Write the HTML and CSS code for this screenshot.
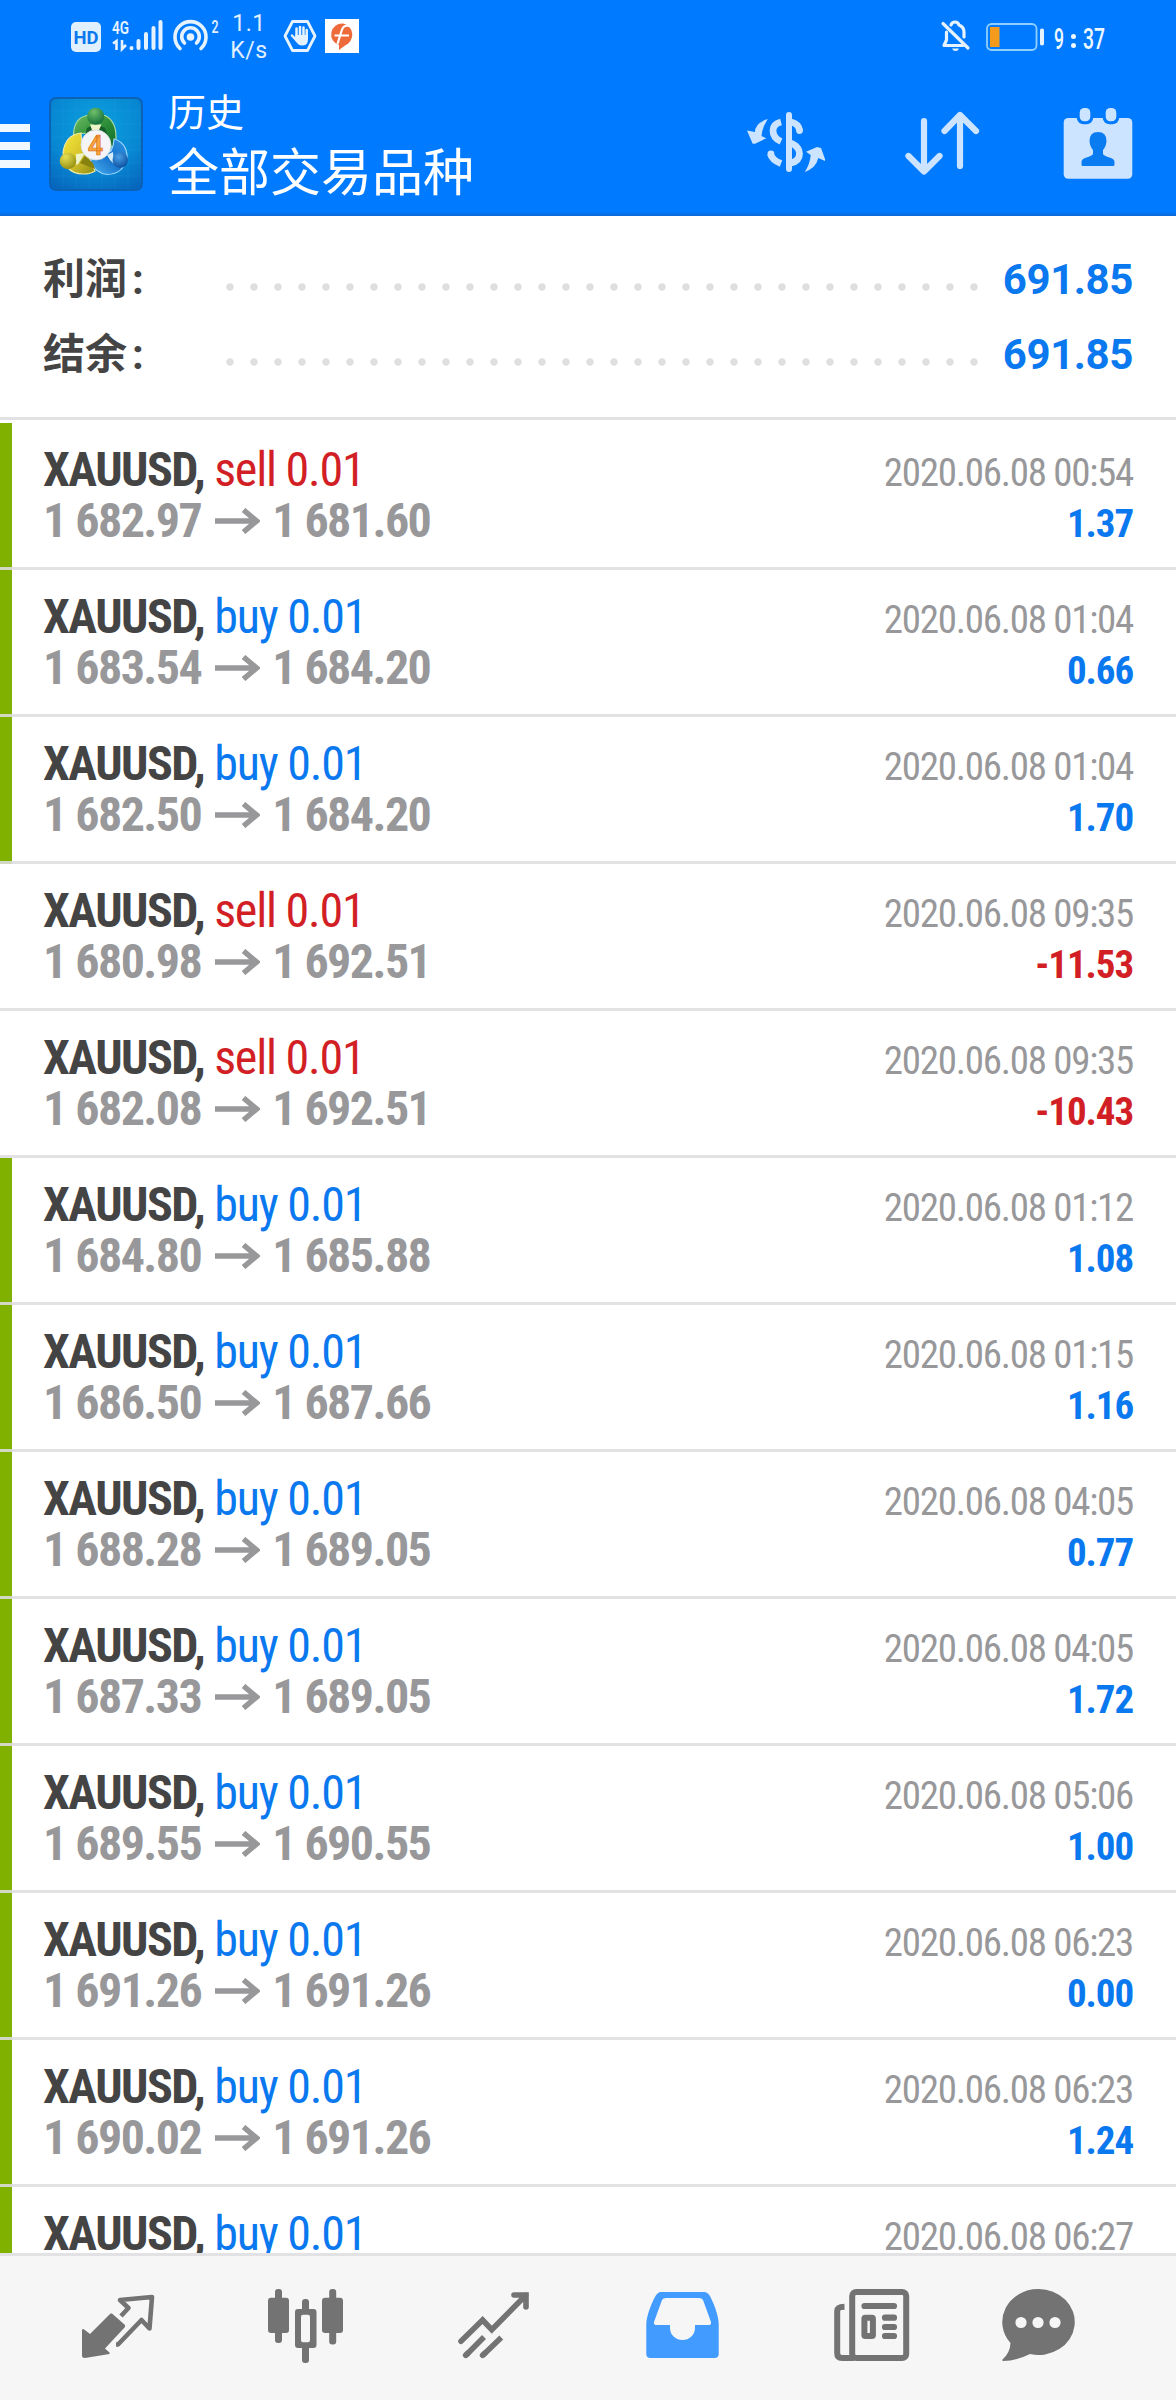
FILE: index.html
```html
<!DOCTYPE html>
<html lang="zh-CN">
<head>
<meta charset="utf-8">
<title>历史</title>
<link rel="stylesheet" href="styles.css">
</head>
<body>
<svg width="0" height="0" class="defs"><symbol id="arrow" viewBox="0 0 45 26"><path d="M0 13H41M28.500 2L41.500 13L28.500 24" fill="none" stroke="currentColor" stroke-width="5.500"/></symbol></svg>
<div class="screen">
<header class="header">
  <div class="status">
    <svg class="s-hd" width="30" height="30" viewBox="0 0 30 30"><rect width="30" height="30" rx="5" fill="#e0f0ff"/><text x="2.500" y="22" font-size="19" font-weight="700" fill="#0b78ee" textLength="25" lengthAdjust="spacingAndGlyphs">HD</text></svg>
    <svg class="s-net" width="51" height="34" viewBox="0 0 51 34"><text x="0" y="15" font-size="19" font-weight="600" fill="#e6f3ff" textLength="17" lengthAdjust="spacingAndGlyphs">4G</text><g stroke="#e6f3ff" stroke-width="2.600" fill="none"><path d="M1 24.500L4.500 22V31M10 21V30L14 26"/></g><g stroke="#e6f3ff" stroke-width="4" stroke-linecap="round"><path d="M19.500 29V29.200M26.500 22V29M34 15V29M41.500 9V29M48.500 3V29"/></g></svg>
    <svg class="s-hot" width="46" height="34" viewBox="0 0 46 34"><g fill="none" stroke="#e6f3ff" stroke-width="3.600" stroke-linecap="round"><path d="M7 29.500A15.500 15.500 0 1 1 28 29.500"/><path d="M11.500 24A8.800 8.800 0 1 1 23.500 24"/></g><circle cx="17.500" cy="18" r="3.800" fill="#e6f3ff"/><text x="38.500" y="14" font-size="18" font-weight="500" fill="#e6f3ff" textLength="7" lengthAdjust="spacingAndGlyphs">2</text></svg>
    <div class="s-speed"><span>1.1</span><span>K/s</span></div>
    <svg class="s-hex" width="34" height="34" viewBox="0 0 34 34"><path d="M9.500 2.500H24.500L32 17L24.500 31.500H9.500L2 17Z" fill="none" stroke="#e6f3ff" stroke-width="2.800" stroke-linejoin="round"/><g stroke="#e6f3ff" stroke-width="2.500" stroke-linecap="round"><path d="M13.500 9.500V18M17 8V18M20.500 8.500V18M23.700 11V18M9 16.500L14 22"/></g><path d="M12.300 16H25V20Q25 26 20 26.500Q15 27 12 21Z" fill="#e6f3ff"/></svg>
    <svg class="s-f" width="34" height="34" viewBox="0 0 34 34"><rect width="34" height="34" fill="#fff"/><path d="M18 4.500A11.500 11.500 0 0 1 20 26.500L14 31V26A11 11 0 0 1 18 4.500Z" fill="#ee6a3a"/><path d="M26 7.500Q18.500 4.500 16.500 12L12.500 25M9.500 16.500H24" fill="none" stroke="#fff" stroke-width="2.200"/></svg>
    <svg class="s-bell" width="30" height="32" viewBox="0 0 30 32"><g fill="none" stroke="#e6f3ff" stroke-width="3.200" stroke-linecap="round" stroke-linejoin="round"><path d="M2 3.500L27 28M5.500 12V20L3 25.500H22M10 5Q11 2 14 2Q17 2 18 5Q23 7 23 12V17"/></g><path d="M11 28.500H18Q17 31 14.500 31Q12 31 11 28.500Z" fill="#e6f3ff"/></svg>
    <svg class="s-bat" width="59" height="28" viewBox="0 0 59 28"><rect x="1" y="1" width="49.500" height="26" rx="4.500" fill="none" stroke="#8fd0ff" stroke-width="1.800"/><rect x="4" y="4" width="9.500" height="20" fill="#f59b1c"/><rect x="54" y="5.500" width="4" height="17" rx="1.800" fill="#e6f3ff"/></svg>
    <svg class="s-time" width="54" height="28" viewBox="0 0 54 28"><g font-size="30" font-weight="500" fill="#f0f8ff"><text x="1" y="25" textLength="10" lengthAdjust="spacingAndGlyphs">9</text><text x="30" y="25" textLength="22" lengthAdjust="spacingAndGlyphs">37</text></g><circle cx="20.500" cy="12.500" r="2.500" fill="#f0f8ff"/><circle cx="20.500" cy="21.500" r="2.500" fill="#f0f8ff"/></svg>
  </div>
  <div class="appbar">
    <div class="menu"><i></i><i></i><i></i></div>
    <svg class="logo" width="94" height="94" viewBox="0 0 94 94">
      <defs>
        <radialGradient id="bg" cx=".5" cy=".3" r=".8"><stop offset="0" stop-color="#0ba0df"/><stop offset=".6" stop-color="#0888d2"/><stop offset="1" stop-color="#0766bd"/></radialGradient>
        <linearGradient id="gb" x1="0" y1="0" x2="1" y2="1"><stop offset="0" stop-color="#6dbb62"/><stop offset=".5" stop-color="#2f8f3a"/><stop offset="1" stop-color="#0f6a2a"/></linearGradient>
        <linearGradient id="yb" x1="0" y1="0" x2="1" y2="1"><stop offset="0" stop-color="#f6e93c"/><stop offset=".5" stop-color="#d8c52a"/><stop offset="1" stop-color="#8f8a14"/></linearGradient>
        <linearGradient id="bb" x1="1" y1="0" x2="0" y2="1"><stop offset="0" stop-color="#2f93e0"/><stop offset=".5" stop-color="#1673cc"/><stop offset="1" stop-color="#4fb4f2"/></linearGradient>
        <radialGradient id="gr" cx=".4" cy=".25" r=".8"><stop offset="0" stop-color="#6fbf6a"/><stop offset="1" stop-color="#0f6a38"/></radialGradient>
        <radialGradient id="ye" cx=".35" cy=".25" r=".8"><stop offset="0" stop-color="#e6e054"/><stop offset="1" stop-color="#938d10"/></radialGradient>
        <radialGradient id="bl" cx=".4" cy=".3" r=".8"><stop offset="0" stop-color="#4a9fe6"/><stop offset="1" stop-color="#07489a"/></radialGradient>
      </defs>
      <rect x="1" y="1" width="92" height="92" rx="6" fill="url(#bg)" stroke="#0962b8" stroke-width="2"/>
      <path d="M14 2V92M27 2V92M40 2V92M53 2V92M66 2V92M79 2V92M2 14H92M2 27H92M2 40H92M2 53H92M2 66H92M2 79H92" stroke="#35b5ea" stroke-opacity=".12"/>
      <path d="M24.500 38Q25 21 38 18.500H56Q67 24 67 40Q67 47 64 51L56 44L36 36Z" fill="url(#gb)" stroke="#a8dca0" stroke-width="1.200"/>
      <path d="M32 36Q16 38 14 56L18 70Q24 77 34 77Q42 77 46 74L40 60L33 50Z" fill="url(#yb)" stroke="#efe9a0" stroke-width="1.200"/>
      <path d="M65 42Q78 46 78 60Q75 77 58 77.500Q48 77 40 64L50 60L62 54Q65 48 65 42Z" fill="url(#bb)" stroke="#9ad6ff" stroke-width="1.200"/>
      <path d="M38 31Q47 25 56 31L60 42L47 33L36 39Z" fill="#17602a"/>
      <path d="M41 27.500H52.500L50 33H43ZM27 57L36 56L31 64Q30 67 27 68Z" fill="#eef3c8"/>
      <path d="M31 66L36 59L44 66L46 72Z" fill="#87820f"/>
      <path d="M58 58L64 55L65 67L61 63Z" fill="#d6ecfb"/>
      <circle cx="46.700" cy="19.300" r="8.500" fill="url(#gr)"/><circle cx="19" cy="64" r="8.300" fill="url(#ye)"/><circle cx="71.200" cy="63" r="7.700" fill="url(#bl)"/>
      <circle cx="47" cy="48" r="15" fill="#f5f5f7" stroke="#d8dde2" stroke-width=".8"/>
      <text x="46.500" y="57.500" text-anchor="middle" font-size="27" font-weight="600" fill="#f8a93c" stroke="#dd6f1c" stroke-width=".7">4</text>
    </svg>
    <div class="titles"><span class="t1">历史</span><span class="t2">全部交易品种</span></div>
    <svg class="i-cur" width="82" height="64" viewBox="0 0 82 64"><g fill="none" stroke="#cce4ff" stroke-width="6.800"><path d="M44 5V59" stroke-width="6" stroke-linecap="round"/><path d="M36 12Q28 14 28 20.500Q28 28 36 31.500"/><path d="M25.500 44Q27 50 36 53.500" /><path d="M46 12Q54 14 54.500 20.500M46 33Q54.500 37 54.500 43.500Q54.500 51 46 53"/></g><g fill="#cce4ff"><circle cx="25.900" cy="44" r="3.400"/><circle cx="54.500" cy="20.500" r="3.400"/><path d="M22.700 9Q10 13 10 22L2 20.500L7.700 33.700H10L21.300 28.300L16.500 26Q17 18 22.700 9Z"/><path d="M59.700 62Q65 54 65.700 45L61 41.700L72 37L76 38L80 49V51L73.300 48Q71 58 59.700 62Z"/></g></svg>
    <svg class="i-sort" width="76" height="66" viewBox="0 0 76 66"><g fill="none" stroke="#cce4ff" stroke-width="6.200" stroke-linecap="round" stroke-linejoin="round"><path d="M20 11V61M4.500 46L20 61.500L35.500 46M56 56V5M40.500 21L56 5L72 21"/></g></svg>
    <svg class="i-cal" width="72" height="74" viewBox="0 0 72 74"><rect x="1.700" y="12" width="68.600" height="60.700" rx="4.500" fill="#cce4ff"/><rect x="14.700" y="-1" width="16.600" height="19.300" rx="7" fill="#007aff"/><rect x="40.700" y="-1" width="16.600" height="19.300" rx="7" fill="#007aff"/><rect x="17.700" y="2" width="10.600" height="13.300" rx="4.500" fill="#cce4ff"/><rect x="43.700" y="2" width="10.600" height="13.300" rx="4.500" fill="#cce4ff"/><path d="M36 26Q44.500 26 44.500 35Q44 41 41 44V48Q42 50 49 52Q52.500 53.500 52.500 56V58.500Q52.500 60 51 60H21Q19.500 60 19.500 58.500V56Q19.500 53.500 23 52Q30 50 31 48V44Q28 41 27.500 35Q27.500 26 36 26Z" fill="#0a7cf2"/></svg>
  </div>
</header>
<section class="summary">
  <div class="sum"><b class="label">利润<i>:</i></b><span class="dots"></span><b class="total">691.85</b></div>
  <div class="sum"><b class="label">结余<i>:</i></b><span class="dots"></span><b class="total">691.85</b></div>
</section>
<main class="list">
<div class="row tp"><div class="deal"><p><b>XAUUSD,</b> <span class="sell">sell 0.01</span></p><p class="price">1 682.97<svg><use href="#arrow"/></svg>1 681.60</p></div><div class="res"><time>2020.06.08 00:54</time><b class="up">1.37</b></div></div>
<div class="row tp"><div class="deal"><p><b>XAUUSD,</b> <span class="buy">buy 0.01</span></p><p class="price">1 683.54<svg><use href="#arrow"/></svg>1 684.20</p></div><div class="res"><time>2020.06.08 01:04</time><b class="up">0.66</b></div></div>
<div class="row tp"><div class="deal"><p><b>XAUUSD,</b> <span class="buy">buy 0.01</span></p><p class="price">1 682.50<svg><use href="#arrow"/></svg>1 684.20</p></div><div class="res"><time>2020.06.08 01:04</time><b class="up">1.70</b></div></div>
<div class="row"><div class="deal"><p><b>XAUUSD,</b> <span class="sell">sell 0.01</span></p><p class="price">1 680.98<svg><use href="#arrow"/></svg>1 692.51</p></div><div class="res"><time>2020.06.08 09:35</time><b class="down">-11.53</b></div></div>
<div class="row"><div class="deal"><p><b>XAUUSD,</b> <span class="sell">sell 0.01</span></p><p class="price">1 682.08<svg><use href="#arrow"/></svg>1 692.51</p></div><div class="res"><time>2020.06.08 09:35</time><b class="down">-10.43</b></div></div>
<div class="row tp"><div class="deal"><p><b>XAUUSD,</b> <span class="buy">buy 0.01</span></p><p class="price">1 684.80<svg><use href="#arrow"/></svg>1 685.88</p></div><div class="res"><time>2020.06.08 01:12</time><b class="up">1.08</b></div></div>
<div class="row tp"><div class="deal"><p><b>XAUUSD,</b> <span class="buy">buy 0.01</span></p><p class="price">1 686.50<svg><use href="#arrow"/></svg>1 687.66</p></div><div class="res"><time>2020.06.08 01:15</time><b class="up">1.16</b></div></div>
<div class="row tp"><div class="deal"><p><b>XAUUSD,</b> <span class="buy">buy 0.01</span></p><p class="price">1 688.28<svg><use href="#arrow"/></svg>1 689.05</p></div><div class="res"><time>2020.06.08 04:05</time><b class="up">0.77</b></div></div>
<div class="row tp"><div class="deal"><p><b>XAUUSD,</b> <span class="buy">buy 0.01</span></p><p class="price">1 687.33<svg><use href="#arrow"/></svg>1 689.05</p></div><div class="res"><time>2020.06.08 04:05</time><b class="up">1.72</b></div></div>
<div class="row tp"><div class="deal"><p><b>XAUUSD,</b> <span class="buy">buy 0.01</span></p><p class="price">1 689.55<svg><use href="#arrow"/></svg>1 690.55</p></div><div class="res"><time>2020.06.08 05:06</time><b class="up">1.00</b></div></div>
<div class="row tp"><div class="deal"><p><b>XAUUSD,</b> <span class="buy">buy 0.01</span></p><p class="price">1 691.26<svg><use href="#arrow"/></svg>1 691.26</p></div><div class="res"><time>2020.06.08 06:23</time><b class="up">0.00</b></div></div>
<div class="row tp"><div class="deal"><p><b>XAUUSD,</b> <span class="buy">buy 0.01</span></p><p class="price">1 690.02<svg><use href="#arrow"/></svg>1 691.26</p></div><div class="res"><time>2020.06.08 06:23</time><b class="up">1.24</b></div></div>
<div class="row tp"><div class="deal"><p><b>XAUUSD,</b> <span class="buy">buy 0.01</span></p></div><div class="res"><time>2020.06.08 06:27</time></div></div>
</main>
<nav class="nav">
  <svg class="n1" width="74" height="66" viewBox="0 0 74 66"><path d="M0 34.500L1.500 34L8 39L28.500 18.500H30L43 30V32L23 53.500L27.500 57.500V59L3 63Q0 63 0 60.500Z" fill="#737373"/><path d="M39 21L46.500 13L38 5L70 2L67.500 33.500L59.500 25L36 49.500H34" fill="none" stroke="#737373" stroke-width="4.600" stroke-linejoin="round"/></svg>
  <svg class="n2" width="75" height="74" viewBox="0 0 75 74"><g fill="#737373"><rect x="7" width="7" height="54" rx="3"/><rect y="8.700" width="21" height="35.300" rx="3"/><rect x="61.200" width="7" height="55.600" rx="3"/><rect x="54" y="8.700" width="21" height="35.300" rx="3"/><rect x="34" y="10" width="7" height="14" rx="3"/><rect x="34" y="56" width="7" height="18" rx="3"/><path fill-rule="evenodd" d="M30 20H45.500Q48.500 20 48.500 23V56Q48.500 59 45.500 59H30Q27 59 27 56V23Q27 20 30 20ZM35 25.700Q33 25.700 33 28V51Q33 53.300 35 53.300H40Q42 53.300 42 51V28Q42 25.700 40 25.700Z"/></g></svg>
  <svg class="n3" width="72" height="67" viewBox="0 0 72 67"><g fill="none" stroke="#737373" stroke-width="5.600" stroke-linecap="round"><path d="M3 49.300L24.600 28L33.800 37.700L68 3M56 3H68V15"/><path stroke-linecap="butt" d="M7.700 63.500L26 45M24.600 63.500L43.300 45.500"/><path d="M7.700 63.300L10 61M24.600 63.300L27 61"/></g></svg>
  <svg class="n4" width="73" height="66" viewBox="0 0 73 66"><path fill-rule="evenodd" fill="#429bff" d="M15 0H58Q61.500 0 64 4C70 16 72.700 26 72.700 32V62Q72.700 66 68.500 66H4.500Q.3 66 .3 62V32C.3 26 4 14 9.500 4Q12 0 15 0ZM20 6H53Q56 6 57 8L65 30Q65.500 33 63 33H49V36A12.400 12 0 0 1 24 36V33H10Q7.500 33 8 30L16 8Q17 6 20 6Z"/></svg>
  <svg class="n5" width="76" height="72" viewBox="0 0 76 72"><g fill="none" stroke="#737373"><rect x="18.200" y="3" width="54" height="66" rx="4" stroke-width="6"/><path d="M10.500 17.800Q3.200 18 3.200 22V64Q3.200 69 8 69H20" stroke-width="6"/><rect x="30.400" y="28.700" width="8.500" height="18.300" rx="1" stroke-width="6"/><path stroke-width="6.200" stroke-linecap="round" d="M30.500 17H60M51 28.700H60M51 38H60M51 47H60"/></g></svg>
  <svg class="n6" width="73" height="72" viewBox="0 0 73 72"><path fill="#737373" d="M36 0A36 33 0 1 1 28 65Q14 72 1 72Q0 72 .5 70.500Q8 64 8.500 54A36 33 0 0 1 36 0Z"/><g fill="#f6f6f6"><circle cx="19" cy="33.500" r="5.600"/><circle cx="36" cy="33.500" r="5.600"/><circle cx="53" cy="33.500" r="5.600"/></g></svg>
</nav>
</div>
</body>
</html>
```
FILE: styles.css
```css
* { box-sizing: border-box; }
body { margin: 0; background: #fff; font-family: Roboto, "Noto Sans CJK SC", sans-serif; }
svg { display: block; flex: none; overflow: visible; }
.defs { position: absolute; }
.screen { width: 1176px; height: 2400px; display: flex; flex-direction: column; overflow: hidden; }

.header { height: 216px; flex: none; background: linear-gradient(#007aff 212px, #0a68d2 216px); }
.status { height: 72px; display: flex; align-items: flex-start; padding: 19px 0 0 71px; }
.s-hd { margin-top: 3px; }
.s-net { margin-left: 11px; }
.s-hot { margin-left: 10px; }
.s-speed { width: 50px; margin: -9px 0 0 5px; display: flex; flex-direction: column; align-items: center; color: #e0f0ff; font-size: 23px; line-height: 27px; letter-spacing: .5px; }
.s-hex { margin-left: 9px; }
.s-f { margin-left: 8px; }
.s-bell { margin: 1px 0 0 582px; }
.s-bat { margin: 4px 0 0 15px; }
.s-time { margin: 5px 0 0 8px; }

.appbar { height: 144px; display: flex; align-items: flex-start; }
.menu { width: 30px; margin-top: 52px; display: grid; gap: 10px; }
.menu i { height: 8px; background: #f2f8ff; }
.logo { margin: 25px 0 0 19px; }
.titles { width: 329px; margin: 13px 0 0 25px; display: flex; flex-direction: column; color: #fff; }
.t1 { font-size: 38px; line-height: 56px; }
.t2 { font-size: 51px; line-height: 66px; white-space: nowrap; }
.i-cur { margin: 38px 0 0 248px; }
.i-sort { margin: 38px 0 0 77px; }
.i-cal { margin: 34px 0 0 82px; }

.summary { height: 204px; flex: none; padding: 26px 43px 0; border-bottom: 3px solid #e2e2e4; }
.sum { height: 75px; display: flex; align-items: center; font-size: 42px; line-height: 75px; }
.label { width: 175px; color: #444; white-space: nowrap; }
.label i { font-style: normal; margin-left: 5px; }
.dots { width: 768px; height: 24px; margin-top: 15px; background: radial-gradient(circle, #dfdfdf 3.300px, transparent 4.200px) 0 0 / 24px 24px; }
.total { flex: 1; text-align: right; color: #0a78ee; letter-spacing: -.4px; }

.list { flex: none; height: 1833px; padding-top: 3px; overflow: hidden; }
.row { height: 147px; border-bottom: 3px solid rgba(222, 222, 224, .87); padding: 21px 43px 0; display: flex; justify-content: space-between; }
.tp { background: linear-gradient(#80b000, #80b000) 0 0 / 12px 147px no-repeat border-box; }
.deal, .res { font-family: "Roboto Condensed", Roboto, sans-serif; font-stretch: 75%; white-space: nowrap; }
.deal { font-size: 48px; line-height: 51px; color: #444; }
.deal p { margin: 0; letter-spacing: -1.2px; }
.deal b { letter-spacing: -1.5px; }
.deal .price { display: flex; align-items: center; font-weight: 700; color: #98989a; letter-spacing: -1.55px; }
.price svg { width: 45px; height: 26px; margin: 0 12px 0 14px; }
.res { padding-top: 4px; display: flex; flex-direction: column; align-items: flex-end; font-size: 39px; line-height: 51px; letter-spacing: -1.28px; }
.res time { color: #98989a; }
.res b { letter-spacing: -1.1px; }
.buy { color: #0a78ee; }
.up { color: #0a78ee; }
.sell, .down { color: #d21f26; }

.nav { height: 147px; flex: none; border-top: 3px solid #e2e2e4; background: #f6f6f6; display: flex; padding-left: 82px; }
.n1 { margin-top: 39px; }
.n2 { margin: 33px 0 0 112px; }
.n3 { margin: 36px 0 0 115px; }
.n4 { margin: 36px 0 0 116px; }
.n5 { margin: 33px 0 0 115px; }
.n6 { margin: 33px 0 0 92px; }
```
